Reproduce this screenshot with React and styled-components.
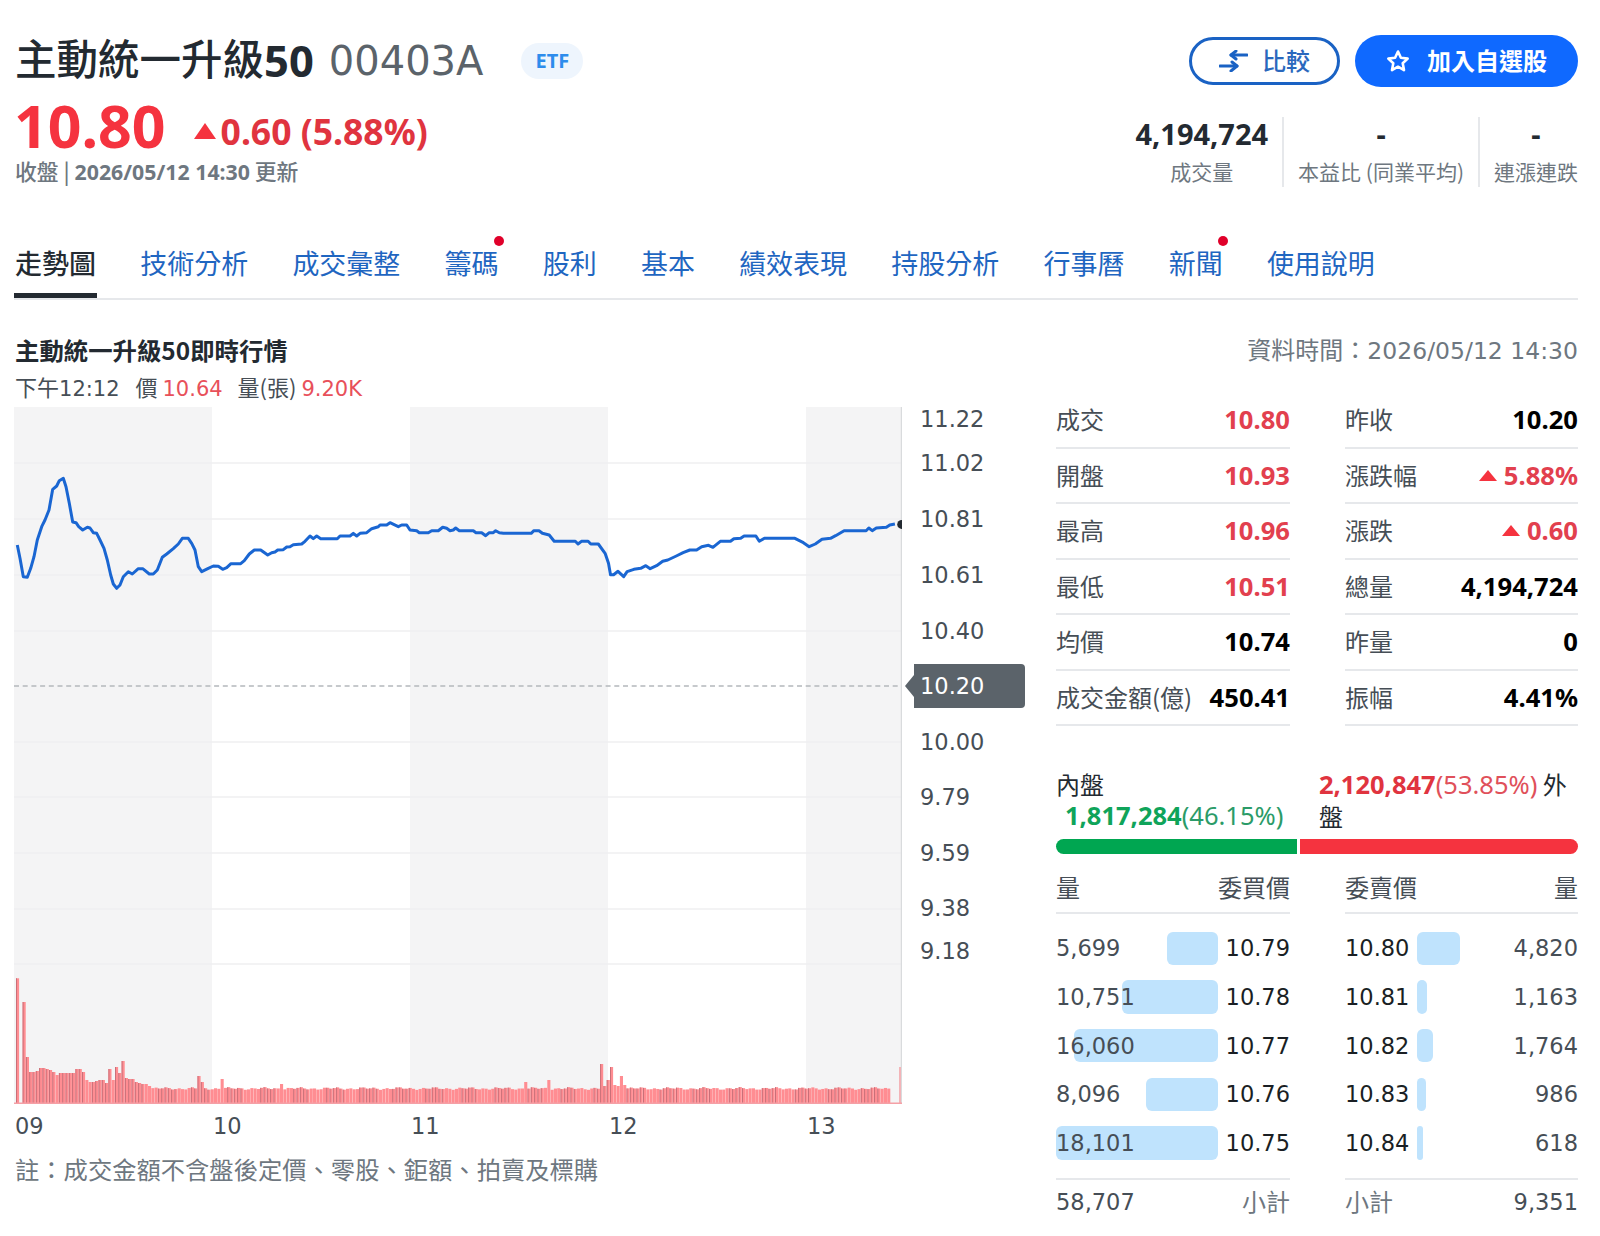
import React from "react";
import styled, { createGlobalStyle } from "styled-components";

const CJK = `"Noto Sans CJK TC", "Noto Sans", sans-serif`;
const NUM = `"DejaVu Sans", "Noto Sans CJK TC", sans-serif`;
const BOLD = `"Noto Sans", "Noto Sans CJK TC", sans-serif`;

const Global = createGlobalStyle`
    html, body { margin: 0; padding: 0; background: #fff; }
    body { font-family: ${CJK}; color: #232a31; }
`;

const Page = styled.div`
    width: 1564px;
    height: 1236px;
    padding: 35px 22px 0 14px;
    overflow: hidden;
`;

const TopRow = styled.div`
    display: flex;
    align-items: center;
    justify-content: space-between;
    height: 52px;
`;

const Title = styled.div`
    display: flex;
    align-items: center;
    padding-left: 1px;
    font-size: 41.5px;
    line-height: 52px;
    font-weight: 500;
`;

const TitleName = styled.span`
    padding-bottom: 8px;
`;

const Latin = styled.span`
    font-family: ${BOLD};
    font-weight: 700;
    font-size: 43.5px;
    padding-bottom: 2px;
`;

const Symbol = styled.span`
    font-family: ${NUM};
    font-size: 40px;
    font-weight: 400;
    color: #5b636a;
    margin-left: 15px;
`;

const EtfBadge = styled.span`
    width: 62px;
    height: 36px;
    margin-left: 38px;
    border-radius: 18px;
    background: #eef5fd;
    color: #2d8cec;
    font: 700 20px/36px ${BOLD};
    text-align: center;
`;

const Actions = styled.div`
    display: flex;
    align-items: center;
    gap: 15px;
`;

const CompareButton = styled.button`
    display: flex;
    align-items: center;
    justify-content: center;
    gap: 14px;
    box-sizing: border-box;
    width: 151px;
    height: 48px;
    padding: 0;
    border: 3px solid #1a62c4;
    border-radius: 24px;
    background: #fff;
    color: #2a68bd;
    font: 500 24px ${CJK};
`;

const WatchButton = styled.button`
    display: flex;
    align-items: center;
    justify-content: center;
    gap: 17px;
    width: 223px;
    height: 52px;
    padding: 0;
    border: 0;
    border-radius: 26px;
    background: #0f69ff;
    color: #fff;
    font: 700 24px ${CJK};
`;

const ButtonText = styled.span`
    padding-bottom: 4px;
`;

const PriceRow = styled.div`
    display: flex;
    justify-content: space-between;
    height: 100px;
`;

const PriceCol = styled.div`
    padding-top: 12px;
`;

const PriceLine = styled.div`
    display: flex;
    align-items: center;
    height: 52px;
    color: #f5333f;
    font-family: ${BOLD};
    font-weight: 700;
`;

const Price = styled.span`
    font-size: 59px;
    line-height: 52px;
`;

const Triangle = styled.i`
    flex: none;
    width: 0;
    height: 0;
    margin: ${(p) => p.$m};
    border-left: ${(p) => p.$w}px solid transparent;
    border-right: ${(p) => p.$w}px solid transparent;
    border-bottom: ${(p) => p.$h}px solid #f5333f;
`;

const Change = styled.span`
    font-size: 35.5px;
    line-height: 52px;
    padding-top: 12px;
    color: #e0343f;
`;

const UpdatedAt = styled.div`
    margin-top: 5px;
    padding-left: 1px;
    color: #6e7780;
    font: 500 21.8px/30px ${CJK};
`;

const UpdatedNum = styled.span`
    font: 700 21.3px/30px ${BOLD};
`;

const Stats = styled.div`
    display: flex;
    margin-top: 30px;
    height: 70px;
`;

const Stat = styled.div`
    display: flex;
    flex-direction: column;
    align-items: center;
    padding: 0 14px;
    border-left: ${(p) => (p.$first ? "0" : "2px solid #e6e8eb")};
    &:last-child { padding-right: 0; }
`;

const StatValue = styled.div`
    color: #232a31;
    font: 700 29px/34px ${BOLD};
`;

const StatLabel = styled.div`
    margin-top: 5px;
    color: #6e7780;
    font: 400 21px/30px ${CJK};
    white-space: nowrap;
`;

const Tabs = styled.div`
    display: flex;
    gap: 42.2px;
    margin-top: 43px;
    height: 68px;
    border-bottom: 2px solid #e6e8eb;
`;

const Tab = styled.div`
    position: relative;
    box-sizing: border-box;
    height: 68px;
    padding: 0 1px;
    color: ${(p) => (p.$active ? "#232a31" : "#1f66c1")};
    border-bottom: 5px solid ${(p) => (p.$active ? "#232a31" : "transparent")};
    font: ${(p) => (p.$active ? 500 : 400)} 27px/66px ${CJK};
    ${(p) => p.$dot && `
        &::after {
            content: "";
            position: absolute;
            top: 6px;
            right: -4px;
            width: 10px;
            height: 10px;
            border-radius: 50%;
            background: #e0002a;
        }
    `}
`;

const SectionHead = styled.div`
    display: flex;
    justify-content: space-between;
    align-items: center;
    height: 30px;
    margin-top: 35px;
    padding-left: 1px;
`;

const SectionTitle = styled.div`
    font: 700 24.4px/30px ${CJK};
`;

const DataTime = styled.div`
    color: #6e7780;
    font: 400 24px/30px ${CJK};
`;

const Num = styled.span`
    font-family: ${NUM};
    font-size: ${(p) => p.$size || 22}px;
    color: ${(p) => p.$color || "inherit"};
`;

const Body = styled.div`
    display: grid;
    grid-template-columns: 1010px 522px;
    column-gap: 32px;
    margin-top: 8px;
`;

const InfoLine = styled.div`
    display: flex;
    height: 30px;
    padding-left: 1px;
    margin-top: -2px;
    color: #464e56;
    font: 400 22px/30px ${CJK};
    white-space: pre;
`;

const InfoItem = styled.span`
    margin-left: ${(p) => p.$gap || 0}px;
`;

const ChartRow = styled.div`
    display: flex;
    margin-top: 6px;
`;

const ChartSvg = styled.svg`
    display: block;
    flex: none;
`;

const YAxis = styled.div`
    display: flex;
    flex-direction: column;
    margin-top: -3px;
    padding-left: 18px;
`;

const YLabel = styled.div`
    height: 30px;
    margin-top: ${(p) => p.$top}px;
    color: #464e56;
    font: 400 22.5px/30px ${NUM};
`;

const BaseTag = styled.div`
    position: relative;
    width: 105px;
    height: 44px;
    margin: ${(p) => p.$top}px 0 0 -6px;
    padding-left: 6px;
    border-radius: 0 4px 4px 0;
    background: #5b636a;
    color: #fff;
    font: 400 22.5px/44px ${NUM};
    &::before {
        content: "";
        position: absolute;
        left: -9px;
        top: 11px;
        border-top: 11px solid transparent;
        border-bottom: 11px solid transparent;
        border-right: 9px solid #5b636a;
    }
`;

const XAxis = styled.div`
    display: grid;
    grid-template-columns: repeat(4, 198px) 96px;
    width: 888px;
    height: 42px;
    margin-top: 1px;
    padding-left: 1px;
    color: #464e56;
    font: 400 22.5px/42px ${NUM};
`;

const Note = styled.div`
    margin-top: 6px;
    padding-left: 1px;
    color: #6e7780;
    font: 400 24.3px/32px ${CJK};
`;

const QuoteGrid = styled.div`
    display: grid;
    grid-template-columns: 234px 233px;
    column-gap: 55px;
    margin-top: 20px;
`;

const QuoteRow = styled.div`
    display: flex;
    align-items: center;
    justify-content: space-between;
    box-sizing: border-box;
    height: 55.5px;
    border-bottom: 2px solid #e6e8eb;
`;

const QuoteLabel = styled.span`
    padding-bottom: 2px;
    color: #464e56;
    font: 400 24px ${CJK};
    white-space: nowrap;
`;

const QuoteValue = styled.span`
    display: flex;
    align-items: center;
    color: ${(p) => (p.$up ? "#e2404e" : "#000")};
    font: 700 25.6px ${BOLD};
`;

const SplitText = styled.div`
    display: grid;
    grid-template-columns: 263px 259px;
    margin-top: 41.5px;
    font: 400 24px/31px ${CJK};
`;

const SplitLeft = styled.div`
    height: 62px;
    white-space: nowrap;
`;

const SplitRight = styled.div`
    width: 250px;
`;

const SplitValue = styled.div`
    padding-left: 9px;
`;

const Strong = styled.span`
    font: 700 25.5px/31px ${BOLD};
    color: ${(p) => p.$color};
`;

const Thin = styled.span`
    font: 400 25.5px/31px ${BOLD};
    color: ${(p) => p.$color};
`;

const SplitBar = styled.div`
    display: flex;
    gap: 3px;
    height: 15px;
    margin-top: 8px;
`;

const SplitFill = styled.div`
    width: ${(p) => p.$width}px;
    background: ${(p) => p.$color};
    border-radius: ${(p) => p.$radius};
`;

const OrderGrid = styled.div`
    display: grid;
    grid-template-columns: 234px 233px;
    column-gap: 55px;
`;

const OrderHead = styled.div`
    display: flex;
    align-items: center;
    justify-content: space-between;
    box-sizing: border-box;
    height: 60px;
    padding-top: 7px;
    margin-bottom: 18px;
    border-bottom: 2px solid #e6e8eb;
    color: #464e56;
    font: 400 24px ${CJK};
`;

const OrderRow = styled.div`
    position: relative;
    display: flex;
    align-items: center;
    justify-content: space-between;
    height: 33.5px;
    margin-bottom: 15.2px;
    color: #464e56;
    font: 400 22.5px ${NUM};
`;

const DepthBar = styled.div`
    position: absolute;
    top: 0;
    bottom: 0;
    ${(p) => (p.$side === "bid" ? "right: 72px;" : "left: 72px;")}
    border-radius: 6px;
    background: #bfe3fd;
`;

const OrderText = styled.span`
    position: relative;
    color: ${(p) => (p.$dark ? "#1a1f24" : "inherit")};
`;

const SubTotal = styled.div`
    display: flex;
    align-items: center;
    justify-content: space-between;
    height: 45px;
    margin-top: 18px;
    border-top: 2px solid #e6e8eb;
    color: #464e56;
    font: 400 22.5px ${NUM};
`;

const SubLabel = styled.span`
    padding-bottom: 3px;
    color: #6e7780;
    font: 400 24px ${CJK};
`;

// traced from the chart, in crop pixels: left part x/3, right part 500 + x/2.95
const lineLeft = [[52,435],[60,475],[70,530],[82,532],[92,505],[102,470],[112,420],[125,380],[135,360],[147,330],[158,268],[170,258],[178,242],[190,235],[198,260],[208,310],[218,366],[228,368],[236,380],[248,390],[262,382],[270,384],[280,398],[290,400],[300,420],[312,445],[322,480],[332,525],[340,552],[350,565],[360,555],[370,530],[385,515],[397,522],[415,506],[428,506],[448,522],[460,522],[472,510],[487,472],[500,462],[520,446],[535,432],[547,415],[565,415],[575,430],[585,450],[595,500],[605,515],[625,505],[640,498],[655,499],[668,508],[680,503],[693,491],[722,491],[733,482],[748,462],[763,450],[782,450],[803,465],[815,458],[825,456],[833,450],[850,449],[860,441],[870,440],[880,434],[905,432],[915,424],[930,408],[940,416],[950,408],[962,416],[1012,416],[1020,408],[1050,408],[1060,400],[1070,408],[1080,400],[1100,398],[1115,386],[1135,380],[1140,375],[1160,375],[1170,368],[1195,380],[1205,375],[1220,375],[1230,390],[1250,392],[1258,398],[1285,398],[1295,392],[1315,392],[1328,382],[1340,385],[1350,392],[1360,390],[1367,384],[1378,392],[1420,392],[1428,398],[1445,398],[1457,407],[1468,398],[1480,398],[1487,392],[1498,398]];
const lineRight = [[10,400],[92,400],[100,392],[115,392],[125,400],[145,405],[160,424],[222,424],[230,432],[240,424],[260,424],[268,432],[290,432],[310,460],[320,490],[326,524],[335,524],[348,514],[365,530],[375,515],[395,508],[415,505],[430,497],[443,506],[462,497],[480,484],[495,480],[520,468],[540,458],[560,450],[580,450],[595,440],[615,436],[628,442],[650,424],[680,424],[690,416],[710,415],[720,408],[755,408],[765,424],[780,415],[870,415],[895,428],[912,440],[930,432],[950,418],[975,415],[990,407],[1015,392],[1080,392],[1088,384],[1098,392],[1110,384],[1140,382],[1150,375],[1165,372]];
const linePoints = [
    ...lineLeft.map(([x, y]) => [x / 3 - 14, y / 3 - 7]),
    ...lineRight.map(([x, y]) => [486 + x / 2.95, y / 3 - 7]),
].map((p) => p.map((n) => n.toFixed(1)).join(",")).join(" ");

const spikes = {0:125.7,1:0,2:102,3:47,4:32,5:32,6:33,7:36,8:36,9:35,10:34,11:32,12:29,13:31,14:31,15:31,16:31,17:31,18:35,19:35,20:32,21:24,22:22,23:22,24:23,25:24,26:24,27:21,28:35,29:24,30:37,31:31,32:43,33:26,34:25,35:25,36:22,37:21,38:20,39:20,40:18,55:28,56:22,62:25,80:20,154:22,161:24,177:40,178:18,179:24,180:37,181:19,182:18,183:28,184:19};

const bars = Array.from({ length: 265 }, (_, i) => {
    const h = spikes[i] !== undefined ? spikes[i] : 15.5 + 0.8 * Math.sin(i * 1.7) + 0.6 * Math.sin(i * 0.61);
    return { x: 2 + i * 3.3, h, dark: i < 3 || spikes[i] > 30 || Math.abs(Math.sin(i * 0.31)) > 0.65 };
});

const gridYs = [56, 112, 168, 224, 335, 390, 446, 502, 557];

const PriceChart = () => (
    <ChartSvg width="888" height="697" viewBox="0 0 888 697">
        <rect x="0" y="0" width="198" height="697" fill="#f4f4f5" />
        <rect x="396" y="0" width="198" height="697" fill="#f4f4f5" />
        <rect x="792" y="0" width="96" height="697" fill="#f4f4f5" />
        {gridYs.map((y) => (
            <line key={y} x1="0" x2="888" y1={y} y2={y} stroke="#efeff0" strokeWidth="1.5" />
        ))}
        <line x1="0" x2="888" y1="279" y2="279" stroke="#b4b8bc" strokeWidth="1.5" strokeDasharray="5 3.7" />
        <line x1="887.5" x2="887.5" y1="0" y2="697" stroke="#d9dbdd" strokeWidth="1.5" />
        {bars.map((b) => (
            <g key={b.x}>
                <rect x={b.x} y={697 - b.h} width="3.1" height={b.h} fill={b.h ? "#ff8d92" : "none"} />
                {b.dark && <rect x={b.x} y={697 - b.h} width="1" height={b.h} fill="#c96f78" />}
            </g>
        ))}
        <rect x="885" y="660" width="2" height="37" fill="#f3b4b8" />
        <rect x="0" y="695.5" width="888" height="1.5" fill="#f5a0a6" />
        <polyline points={linePoints} fill="none" stroke="#1a66d2" strokeWidth="3" strokeLinejoin="round" />
        <circle cx="887.7" cy="117.4" r="4.5" fill="#232a31" />
    </ChartSvg>
);

const CompareIcon = () => (
    <svg width="29" height="22" viewBox="0 0 29 22" fill="none" stroke="#1a62c4" strokeWidth="3" strokeLinecap="round" strokeLinejoin="round">
        <path d="M28 5H12" />
        <path d="M17 1L12 5L17 9" />
        <path d="M1 16H18" />
        <path d="M13 12L18 16L12 21" />
    </svg>
);

const StarIcon = () => (
    <svg width="24" height="24" viewBox="0 0 24 24" fill="none" stroke="#fff" strokeWidth="2.6" strokeLinejoin="round">
        <path d="M12 2.5l2.9 6.3 6.8.8-5 4.7 1.3 6.8-6-3.4-6 3.4 1.3-6.8-5-4.7 6.8-.8z" />
    </svg>
);

const tabs = ["走勢圖", "技術分析", "成交彙整", "籌碼", "股利", "基本", "績效表現", "持股分析", "行事曆", "新聞", "使用說明"];

const yLabels = [
    { v: "11.22", top: 0 },
    { v: "11.02", top: 14 },
    { v: "10.81", top: 26 },
    { v: "10.61", top: 26 },
    { v: "10.40", top: 26 },
    { v: "10.20", top: 18, tag: true },
    { v: "10.00", top: 19 },
    { v: "9.79", top: 25 },
    { v: "9.59", top: 26 },
    { v: "9.38", top: 25 },
    { v: "9.18", top: 13 },
];

const quotesLeft = [
    ["成交", "10.80", true],
    ["開盤", "10.93", true],
    ["最高", "10.96", true],
    ["最低", "10.51", true],
    ["均價", "10.74", false],
    ["成交金額(億)", "450.41", false],
];

const quotesRight = [
    ["昨收", "10.20", false],
    ["漲跌幅", "5.88%", true, true],
    ["漲跌", "0.60", true, true],
    ["總量", "4,194,724", false],
    ["昨量", "0", false],
    ["振幅", "4.41%", false],
];

const bids = [["5,699", 5699, "10.79"], ["10,751", 10751, "10.78"], ["16,060", 16060, "10.77"], ["8,096", 8096, "10.76"], ["18,101", 18101, "10.75"]];
const asks = [["10.80", 4820, "4,820"], ["10.81", 1163, "1,163"], ["10.82", 1764, "1,764"], ["10.83", 986, "986"], ["10.84", 618, "618"]];
const barWidth = (n) => `${(n / 18101) * 162}px`;

const QuoteColumn = ({ rows }) => (
    <div>
        {rows.map(([label, value, up, arrow]) => (
            <QuoteRow key={label}>
                <QuoteLabel>{label}</QuoteLabel>
                <QuoteValue $up={up}>
                    {arrow && <Triangle $w={9} $h={11} $m="0 7px 0 0" />}
                    {value}
                </QuoteValue>
            </QuoteRow>
        ))}
    </div>
);

const App = () => (
    <Page>
        <Global />
        <TopRow>
            <Title>
                <TitleName>主動統一升級</TitleName>
                <Latin>50</Latin>
                <Symbol>00403A</Symbol>
                <EtfBadge>ETF</EtfBadge>
            </Title>
            <Actions>
                <CompareButton><CompareIcon /><ButtonText>比較</ButtonText></CompareButton>
                <WatchButton><StarIcon /><ButtonText>加入自選股</ButtonText></WatchButton>
            </Actions>
        </TopRow>
        <PriceRow>
            <PriceCol>
                <PriceLine>
                    <Price>10.80</Price>
                    <Triangle $w={11} $h={16} $m="12px 5px 0 28px" />
                    <Change>0.60 (5.88%)</Change>
                </PriceLine>
                <UpdatedAt>收盤 | <UpdatedNum>2026/05/12 14:30</UpdatedNum> 更新</UpdatedAt>
            </PriceCol>
            <Stats>
                <Stat $first>
                    <StatValue>4,194,724</StatValue>
                    <StatLabel>成交量</StatLabel>
                </Stat>
                <Stat>
                    <StatValue>-</StatValue>
                    <StatLabel>本益比 (同業平均)</StatLabel>
                </Stat>
                <Stat>
                    <StatValue>-</StatValue>
                    <StatLabel>連漲連跌</StatLabel>
                </Stat>
            </Stats>
        </PriceRow>
        <Tabs>
            {tabs.map((t, i) => (
                <Tab key={t} $active={i === 0} $dot={t === "籌碼" || t === "新聞"}>{t}</Tab>
            ))}
        </Tabs>
        <SectionHead>
            <SectionTitle>主動統一升級50即時行情</SectionTitle>
            <DataTime>資料時間：<Num $size={23.5}>2026/05/12 14:30</Num></DataTime>
        </SectionHead>
        <Body>
            <div>
                <InfoLine>
                    <InfoItem>下午<Num $size={21}>12:12</Num></InfoItem>
                    <InfoItem $gap={16}>價 <Num $size={21} $color="#e8505a">10.64</Num></InfoItem>
                    <InfoItem $gap={15}>量(張) <Num $size={21} $color="#e8505a">9.20K</Num></InfoItem>
                </InfoLine>
                <ChartRow>
                    <PriceChart />
                    <YAxis>
                        {yLabels.map((l) =>
                            l.tag ? (
                                <BaseTag key={l.v} $top={l.top}>{l.v}</BaseTag>
                            ) : (
                                <YLabel key={l.v} $top={l.top}>{l.v}</YLabel>
                            )
                        )}
                    </YAxis>
                </ChartRow>
                <XAxis>
                    <span>09</span><span>10</span><span>11</span><span>12</span><span>13</span>
                </XAxis>
                <Note>註：成交金額不含盤後定價、零股、鉅額、拍賣及標購</Note>
            </div>
            <div>
                <QuoteGrid>
                    <QuoteColumn rows={quotesLeft} />
                    <QuoteColumn rows={quotesRight} />
                </QuoteGrid>
                <SplitText>
                    <SplitLeft>
                        內盤
                        <SplitValue><Strong $color="#0fa45a">1,817,284</Strong><Thin $color="#2b9b68">(46.15%)</Thin></SplitValue>
                    </SplitLeft>
                    <SplitRight>
                        <Strong $color="#e0343f">2,120,847</Strong><Thin $color="#e0505a">(53.85%)</Thin> 外盤
                    </SplitRight>
                </SplitText>
                <SplitBar>
                    <SplitFill $color="#00a651" $radius="8px 0 0 8px" $width={241} />
                    <SplitFill $color="#f5333f" $radius="0 8px 8px 0" $width={278} />
                </SplitBar>
                <OrderGrid>
                    <div>
                        <OrderHead><span>量</span><span>委買價</span></OrderHead>
                        {bids.map(([qty, n, price]) => (
                            <OrderRow key={price}>
                                <DepthBar $side="bid" style={{ width: barWidth(n) }} />
                                <OrderText>{qty}</OrderText>
                                <OrderText $dark>{price}</OrderText>
                            </OrderRow>
                        ))}
                        <SubTotal><span>58,707</span><SubLabel>小計</SubLabel></SubTotal>
                    </div>
                    <div>
                        <OrderHead><span>委賣價</span><span>量</span></OrderHead>
                        {asks.map(([price, n, qty]) => (
                            <OrderRow key={price}>
                                <DepthBar $side="ask" style={{ width: barWidth(n) }} />
                                <OrderText $dark>{price}</OrderText>
                                <OrderText>{qty}</OrderText>
                            </OrderRow>
                        ))}
                        <SubTotal><SubLabel>小計</SubLabel><span>9,351</span></SubTotal>
                    </div>
                </OrderGrid>
            </div>
        </Body>
    </Page>
);

export default App;
